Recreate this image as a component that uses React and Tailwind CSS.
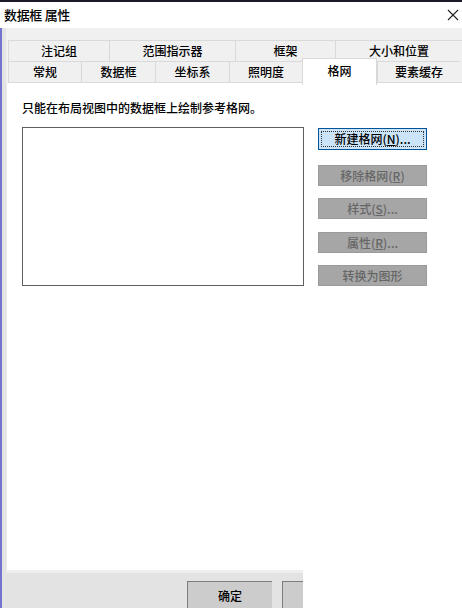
import React from 'react';

const row1 = [
  { label: '注记组', w: 'w-[101px]' },
  { label: '范围指示器', w: 'w-[126px]' },
  { label: '框架', w: 'w-[100px]' },
  { label: '大小和位置', w: 'w-[127px]' },
];

const row2 = [
  { label: '常规', w: 'w-[73px]' },
  { label: '数据框', w: 'w-[74px]' },
  { label: '坐标系', w: 'w-[74px]' },
  { label: '照明度', w: 'w-[73px]' },
  { label: '格网', w: 'w-[75px]', active: true },
  { label: '要素缓存', w: 'w-[83px]' },
];

function Tab({ label, w, active }) {
  if (active) {
    return (
      <div className={`${w} h-[27px] -mt-[3px] -mb-[2px] relative z-10 bg-white border-x border-t border-[#d9d9d9] flex justify-center pt-[3px] text-[12px] text-black`}>
        {label}
      </div>
    );
  }
  return (
    <div className={`${w} h-full bg-[#f0f0f0] border-l border-t border-[#d9d9d9] flex items-center justify-center text-[12px] text-black`}>
      {label}
    </div>
  );
}

function DisabledButton({ children, mt }) {
  return (
    <div className={`${mt} w-[109px] h-[21px] bg-[#a6a6a6] border border-[#9a9a9a] flex items-center justify-center text-[12px] text-[#666666]`}>
      {children}
    </div>
  );
}

export default function App() {
  return (
    <div className="w-[462px] h-[608px] overflow-hidden bg-white flex flex-col font-['Noto_Sans_CJK_SC','Microsoft_YaHei',sans-serif] font-medium select-none">
      {/* title bar */}
      <div className="h-[28px] shrink-0 bg-white border-t-2 border-[#1a1a2a] flex items-center justify-between pl-[4px] pr-[2px]">
        <span className="text-[13px] text-black tracking-tight">数据框 属性</span>
        <svg width="12" height="12" viewBox="0 0 12 12" className="mr-[1px]">
          <path d="M1 1 L11 11 M11 1 L1 11" stroke="#222" strokeWidth="1.1" />
        </svg>
      </div>

      <div className="flex-1 flex min-h-0">
        <div className="w-[2px] bg-[#7474cf]" />
        <div className="w-[6px] bg-[#e4e4e4]" />
        <div className="flex-1 flex flex-col bg-[#f0f0f0] pt-[12px]">
          {/* tabs */}
          <div className="flex h-[21px] ml-[2px]">
            {row1.map((t) => (
              <Tab key={t.label} {...t} />
            ))}
          </div>
          <div className="flex h-[22px] ml-[2px] border-b border-[#d9d9d9]">
            {row2.map((t) => (
              <Tab key={t.label} {...t} />
            ))}
          </div>

          {/* panel */}
          <div className="flex-1 bg-white border-l border-[#e8e8e8] pl-[15px] pt-[17px]">
            <div className="text-[12px] text-black leading-[16px]">只能在布局视图中的数据框上绘制参考格网。</div>
            <div className="flex mt-[11px]">
              <div className="w-[282px] h-[159px] border border-[#5f5f5f] bg-white" />
              <div className="ml-[14px] pt-[1px] flex flex-col">
                <div className="w-[109px] h-[22px] bg-[#cce4f7] border border-[#005499] p-[2px]">
                  <div className="w-full h-full border border-dotted border-[#333] flex items-center justify-center text-[12px] text-black">
                    新建格网(<span className="underline">N</span>)...
                  </div>
                </div>
                <DisabledButton mt="mt-[15px]">移除格网(<span className="underline">R</span>)</DisabledButton>
                <DisabledButton mt="mt-[12px]">样式(<span className="underline">S</span>)...</DisabledButton>
                <DisabledButton mt="mt-[13px]">属性(<span className="underline">R</span>)...</DisabledButton>
                <DisabledButton mt="mt-[12px]">转换为图形</DisabledButton>
              </div>
            </div>
          </div>

          {/* bottom bar */}
          <div className="h-[38px] shrink-0 flex bg-white">
            <div className="w-[297px] bg-[#e3e3e3] border-t-[3px] border-[#eeeeee] flex items-start pt-[8px] pl-[181px]">
              <div className="w-[85px] h-[30px] bg-[#cccccc] border-t border-l border-[#7d7d7d] flex justify-center pt-[5px] text-[12px] text-black">
                确定
              </div>
              <div className="ml-[10px] w-[21px] h-[30px] bg-[#cccccc] border-t border-l border-[#7d7d7d]" />
            </div>
          </div>
        </div>
      </div>
    </div>
  );
}
